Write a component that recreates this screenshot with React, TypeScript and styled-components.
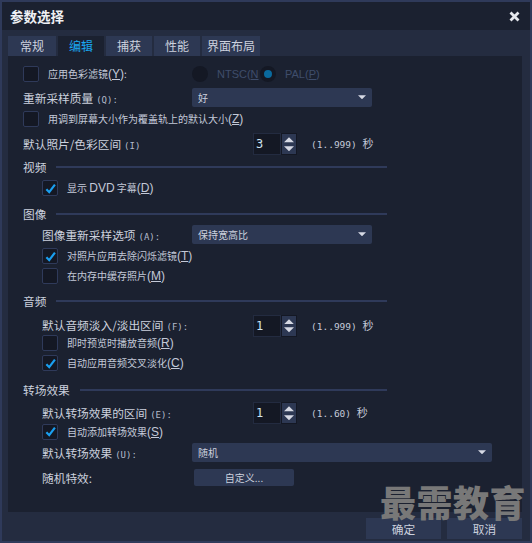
import React from 'react';
import styled, { createGlobalStyle } from 'styled-components';

const Global = createGlobalStyle`
  html, body { margin: 0; padding: 0; background: #2f3a5a; }
  body { font-family: "Noto Sans CJK SC", "Liberation Sans", sans-serif; }
  u { text-underline-offset: 1px; }
`;
const Dialog = styled.div`
  position: relative; width: 532px; height: 543px; box-sizing: border-box;
  border: solid #2f3a5a; border-width: 2px; background: #242c40; color: #ccd1de;
  overflow: hidden; display: flex; flex-direction: column;
`;
const TitleBar = styled.div`
  height: 28px; flex: none; background: #1b2130; display: flex; align-items: center;
  justify-content: space-between; padding: 0 10px 0 8px;
`;
const Title = styled.div`font-size: 13.5px; font-weight: 700; color: #eef0f4; line-height: 28px;`;
const Tabs = styled.div`display: flex; gap: 2px; margin: 6px 0 0 6px; height: 20px; flex: none;`;
const Tab = styled.div<{ $w: number; $active?: boolean }>`
  width: ${p => p.$w}px; height: 20px; line-height: 20px; text-align: center; font-size: 12px;
  background: ${p => (p.$active ? '#1b2130' : '#2d3853')};
  color: ${p => (p.$active ? '#1aa7f0' : '#ccd1de')};
`;
const Panel = styled.div`
  width: 514px; height: 456px; margin-left: 6px; flex: none; box-sizing: border-box;
  background: #1b2130; padding: 8px 0 0 15px; display: flex; flex-direction: column;
`;
const Row = styled.div<{ $h: number; $indent?: boolean }>`
  height: ${p => p.$h}px; flex: none; display: flex; align-items: center;
  padding-left: ${p => (p.$indent ? 19 : 0)}px;
`;
const Box = styled.span`
  width: 16px; height: 16px; box-sizing: border-box; flex: none; margin-right: 9px;
  border: 1px solid #2f3a5a; border-radius: 2px; background: #141824;
  display: flex; align-items: center; justify-content: center;
`;
const CheckLabel = styled.span<{ $w?: number }>`
  font-size: 10px; color: #c3c9d8; white-space: nowrap; line-height: 14px;
  ${p => (p.$w ? `width: ${p.$w}px; flex: none;` : '')}
`;
const Latin = styled.span`font-family: "Liberation Sans", sans-serif; font-size: 12px;`;
const FieldLabel = styled.span<{ $w: number }>`
  width: ${p => p.$w}px; flex: none; font-size: 11.7px; white-space: nowrap; color: #ccd1de;
`;
const Mono = styled.span`font-family: "DejaVu Sans Mono", monospace; font-size: 9px; margin-left: 3px; color: #b4bbcc;`;
const Select = styled.div<{ $w: number }>`
  width: ${p => p.$w}px; height: 19px; box-sizing: border-box; background: #2d3853; border-radius: 2px;
  display: flex; align-items: center; justify-content: space-between; padding: 0 6px; font-size: 10px; color: #ccd1de;
`;
const Spin = styled.div`display: flex; height: 22px; width: 44px; flex: none; margin-top: 2px;`;
const SpinInput = styled.div`
  width: 28px; box-sizing: border-box; background: #141824; border: 1px solid #232b40; color: #cfe4f2;
  font-size: 12px; line-height: 20px; padding-left: 2px; font-family: "DejaVu Sans Mono", monospace;
`;
const SpinBtns = styled.div`
  width: 16px; box-sizing: border-box; background: #2d3853; border: 1px solid #141824;
  display: flex; flex-direction: column; align-items: center; justify-content: center; gap: 3px;
`;
const Range = styled.span`
  margin-left: 14px; font-size: 9.5px; color: #c3c9d8; font-family: "DejaVu Sans Mono", monospace; white-space: nowrap;
`;
const RangeUnit = styled.span`font-family: "Noto Sans CJK SC", sans-serif; font-size: 11px;`;
const SectionRow = styled.div<{ $h: number }>`
  height: ${p => p.$h}px; width: 364px; flex: none; display: flex; align-items: center; gap: 10px;
`;
const SectionTitle = styled.span`font-size: 11.7px; white-space: nowrap; color: #ccd1de;`;
const SectionLine = styled.span`flex: 1; height: 2px; margin-top: 2px; background: #2f3a5a;`;
const RadioDot = styled.span<{ $on?: boolean }>`
  width: 16px; height: 16px; border-radius: 50%; flex: none; box-sizing: border-box;
  background: ${p => (p.$on ? '#0a6a9e' : '#141824')};
  border: ${p => (p.$on ? '4px solid #141824' : 'none')};
`;
const RadioLabel = styled.span<{ $w: number }>`
  font-family: "Liberation Sans", sans-serif; font-size: 11px; color: #3f4d6b; width: ${p => p.$w}px; margin-left: 9px; overflow: hidden; white-space: nowrap; flex: none;
`;
const CustomBtn = styled.div`
  width: 100px; height: 17px; margin-left: 2px; background: #2d3853; border-radius: 2px; text-align: center;
  font-size: 10px; line-height: 17px; color: #ccd1de;
`;
const Footer = styled.div`display: flex; justify-content: flex-end; gap: 6px; margin: 6px 8px 0 0;`;
const FootBtn = styled.div`
  width: 75px; height: 21px; background: #2d3853; text-align: center; font-size: 11.7px; line-height: 21px; color: #ccd1de;
`;
const Watermark = styled.div`
  position: absolute; left: 378px; top: 479px; font-size: 36px; font-weight: 900; letter-spacing: 0.5px;
  color: #787878; line-height: 40px; white-space: nowrap;
`;

const Check = () => (
  <svg width="11" height="11" viewBox="0 0 12 12"><path d="M1.5 6.8 L4.6 10 L10.8 1.8" fill="none" stroke="#1a9ff0" strokeWidth="2.4" /></svg>
);
const Arrow = ({ w = 8, up = false }: { w?: number; up?: boolean }) => (
  <svg width={w} height={w / 2 + 0.5} viewBox="0 0 10 5"><path d={up ? 'M0 5 L5 0 L10 5 Z' : 'M0 0 L10 0 L5 5 Z'} fill="#d6d9e4" /></svg>
);
const Mn = ({ k }: { k: string }) => <Latin>(<u>{k}</u>)</Latin>;
const CheckRow = ({ h, indent, checked, children }: { h: number; indent?: boolean; checked?: boolean; children: React.ReactNode }) => (
  <Row $h={h} $indent={indent}>
    <Box>{checked && <Check />}</Box>
    <CheckLabel>{children}</CheckLabel>
  </Row>
);
const Spinner = ({ value }: { value: string }) => (
  <Spin>
    <SpinInput>{value}</SpinInput>
    <SpinBtns><Arrow w={10} up /><Arrow w={10} /></SpinBtns>
  </Spin>
);
const Section = ({ h, title }: { h: number; title: string }) => (
  <SectionRow $h={h}><SectionTitle>{title}</SectionTitle><SectionLine /></SectionRow>
);

export default function App() {
  return (
    <>
      <Global />
      <Dialog>
        <TitleBar>
          <Title>参数选择</Title>
          <svg width="11" height="11" viewBox="0 0 11 11"><path d="M1.5 1.5 L9.5 9.5 M9.5 1.5 L1.5 9.5" stroke="#e6e8ee" strokeWidth="2.8" /></svg>
        </TitleBar>
        <Tabs>
          <Tab $w={48}>常规</Tab>
          <Tab $w={46} $active>编辑</Tab>
          <Tab $w={46}>捕获</Tab>
          <Tab $w={46}>性能</Tab>
          <Tab $w={58}>界面布局</Tab>
        </Tabs>
        <Panel>
          <Row $h={20}>
            <Box />
            <CheckLabel $w={144}>应用色彩滤镜<Mn k="Y" />:</CheckLabel>
            <RadioDot />
            <RadioLabel $w={43}>NTSC(<u>N</u></RadioLabel>
            <RadioDot $on />
            <RadioLabel $w={36}>PAL(<u>P</u>)</RadioLabel>
          </Row>
          <Row $h={26}>
            <FieldLabel $w={169}>重新采样质量<Mono>(Q):</Mono></FieldLabel>
            <Select $w={180}><span>好</span><Arrow /></Select>
          </Row>
          <CheckRow h={18}>用调到屏幕大小作为覆盖轨上的默认大小<Mn k="Z" /></CheckRow>
          <Row $h={30}>
            <FieldLabel $w={230}>默认照片/色彩区间<Mono>(I)</Mono></FieldLabel>
            <Spinner value="3" />
            <Range>(1..999) <RangeUnit>秒</RangeUnit></Range>
          </Row>
          <Section h={16} title="视频" />
          <CheckRow h={28} indent checked>显示 <Latin>DVD</Latin> 字幕<Mn k="D" /></CheckRow>
          <Section h={22} title="图像" />
          <Row $h={20} $indent>
            <FieldLabel $w={150}>图像重新采样选项<Mono>(A):</Mono></FieldLabel>
            <Select $w={180}><span>保持宽高比</span><Arrow /></Select>
          </Row>
          <CheckRow h={24} indent checked>对照片应用去除闪烁滤镜<Mn k="T" /></CheckRow>
          <CheckRow h={16} indent>在内存中缓存照片<Mn k="M" /></CheckRow>
          <Section h={32} title="音频" />
          <Row $h={17} $indent>
            <FieldLabel $w={211}>默认音频淡入/淡出区间<Mono>(F):</Mono></FieldLabel>
            <Spinner value="1" />
            <Range>(1..999) <RangeUnit>秒</RangeUnit></Range>
          </Row>
          <CheckRow h={20} indent>即时预览时播放音频<Mn k="R" /></CheckRow>
          <CheckRow h={20} indent checked>自动应用音频交叉淡化<Mn k="C" /></CheckRow>
          <Section h={32} title="转场效果" />
          <Row $h={14} $indent>
            <FieldLabel $w={211}>默认转场效果的区间<Mono>(E):</Mono></FieldLabel>
            <Spinner value="1" />
            <Range>(1..60) <RangeUnit>秒</RangeUnit></Range>
          </Row>
          <CheckRow h={25} indent checked>自动添加转场效果<Mn k="S" /></CheckRow>
          <Row $h={16} $indent>
            <FieldLabel $w={150}>默认转场效果<Mono>(U):</Mono></FieldLabel>
            <Select $w={300}><span>随机</span><Arrow /></Select>
          </Row>
          <Row $h={34} $indent>
            <FieldLabel $w={150}>随机特效:</FieldLabel>
            <CustomBtn>自定义...</CustomBtn>
          </Row>
        </Panel>
        <Footer>
          <FootBtn>确定</FootBtn>
          <FootBtn>取消</FootBtn>
        </Footer>
        <Watermark>最需教育</Watermark>
      </Dialog>
    </>
  );
}
